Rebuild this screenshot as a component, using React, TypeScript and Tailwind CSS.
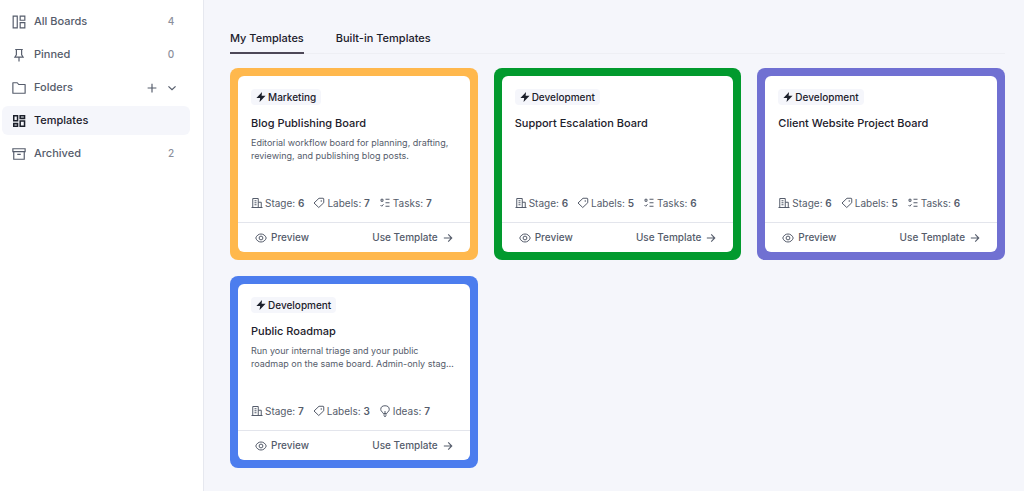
import { useState } from 'react';
import type { ReactNode } from 'react';

type Template = {
  id: string;
  name: string;
  category: string;
  description?: string;
  frame: string;
  stages: number;
  labels: number;
  items: number;
  itemKind: 'Tasks' | 'Ideas';
};

const TEMPLATES: Template[] = [
  {
    id: 'blog',
    name: 'Blog Publishing Board',
    category: 'Marketing',
    description:
      'Editorial workflow board for planning, drafting, reviewing, and publishing blog posts.',
    frame: 'bg-[#ffb84d]',
    stages: 6,
    labels: 7,
    items: 7,
    itemKind: 'Tasks',
  },
  {
    id: 'support',
    name: 'Support Escalation Board',
    category: 'Development',
    frame: 'bg-[#029a2e]',
    stages: 6,
    labels: 5,
    items: 6,
    itemKind: 'Tasks',
  },
  {
    id: 'website',
    name: 'Client Website Project Board',
    category: 'Development',
    frame: 'bg-[#7070d2]',
    stages: 6,
    labels: 5,
    items: 6,
    itemKind: 'Tasks',
  },
  {
    id: 'roadmap',
    name: 'Public Roadmap',
    category: 'Development',
    description:
      'Run your internal triage and your public roadmap on the same board. Admin-only stag…',
    frame: 'bg-[#4c7dee]',
    stages: 7,
    labels: 3,
    items: 7,
    itemKind: 'Ideas',
  },
];

function Icon({ className, children }: { className: string; children: ReactNode }) {
  return (
    <svg
      viewBox="0 0 24 24"
      fill="none"
      stroke="currentColor"
      strokeWidth={2}
      aria-hidden="true"
      className={`shrink-0 ${className}`}
    >
      {children}
    </svg>
  );
}

const BoardsIcon = () => (
  <Icon className="size-[14px]">
    <path d="M2 2h7v20H2zM14 2h8v7h-8zM14 13h8v9h-8z" />
  </Icon>
);

const PinIcon = () => (
  <Icon className="size-[14px]">
    <path d="M5.500 2.500h13M7.500 2.500v9l-2.500 4h14l-2.500-4v-9M12 15.500V23" />
  </Icon>
);

const FolderIcon = () => (
  <Icon className="size-[14px]">
    <path d="M1.500 3h7.500l2.500 3H22.500v15h-21z" strokeLinejoin="round" />
  </Icon>
);

const TemplatesIcon = () => (
  <Icon className="size-[14px]">
    <path d="M3 3h6.500v8.500H3zM14 3h7.500v4.500H14zM3 16.500h6.500V21H3zM14 12h7.500v9H14z" strokeWidth={2.600} />
  </Icon>
);

const ArchiveIcon = () => (
  <Icon className="size-[14px]">
    <path d="M1.500 3h21v5h-21zM3 8v13h18V8M9 12.500h6" />
  </Icon>
);

const BoltIcon = () => (
  <Icon className="size-[10px]">
    <path d="M14.500 0 1 14.500h9L8.500 24 23 9h-9.500z" fill="currentColor" stroke="none" />
  </Icon>
);

const StageIcon = () => (
  <Icon className="size-3">
    <path d="M1 21h22M3.500 21V3h11v18M14.500 10.500h6V21M7 7.500h4M7 11.500h4M7 15.500h4" />
  </Icon>
);

const LabelIcon = () => (
  <Icon className="size-3">
    <path d="M12 2.500h8q1.500 0 1.500 1.500v7.500L11.500 21 2 12z" strokeLinejoin="round" />
    <circle cx="16.500" cy="8" r="1.500" fill="currentColor" stroke="none" />
  </Icon>
);

const TasksIcon = () => (
  <Icon className="size-3">
    <path d="M4 4.500h4v4H4zM13 4.500h8M13 11.500h8M13 18.500h8M3 16l2.500 2.500L9 14.500" />
  </Icon>
);

const IdeasIcon = () => (
  <Icon className="size-3">
    <path d="M8.500 17c0-2.500-5-3.500-5-8a8.500 7.500 0 0 1 17 0c0 4.500-5 5.500-5 8zM8.500 20h7M10.500 23h3M12 17v-5" />
  </Icon>
);

const EyeIcon = () => (
  <Icon className="size-3">
    <path d="M1.500 12C3.500 6.500 7.500 4 12 4s8.500 2.500 10.500 8c-2 5.500-6 8-10.500 8S3.500 17.500 1.500 12z" />
    <circle cx="12" cy="12" r="3.800" />
  </Icon>
);

const ArrowIcon = () => (
  <Icon className="size-[10px]">
    <path d="M2 12h19M12.500 3.500 21 12l-8.500 8.500" strokeWidth={2.600} />
  </Icon>
);

const PlusIcon = () => (
  <Icon className="size-[10px]">
    <path d="M12 1.500v21M1.500 12h21" strokeWidth={2.800} />
  </Icon>
);

const ChevronIcon = () => (
  <Icon className="size-[10px]">
    <path d="m3.500 8 8.500 8 8.500-8" strokeWidth={3} />
  </Icon>
);

function NavItem({
  icon,
  label,
  count,
  active,
  children,
}: {
  icon: ReactNode;
  label: string;
  count?: number;
  active?: boolean;
  children?: ReactNode;
}) {
  return (
    <li
      className={`flex h-[29px] items-center rounded-md pr-[13px] ${
        active ? 'bg-[#f5f6fb] text-[#1c202b]' : 'text-[#555c6b]'
      }`}
    >
      <a
        href="#"
        aria-current={active ? 'page' : undefined}
        className="flex flex-1 items-center gap-2 pl-[10px]"
      >
        {icon}
        <span className="flex-1">{label}</span>
        {count !== undefined && (
          <span className="w-3 text-center text-[10px] text-[#8b8f9b]">{count}</span>
        )}
      </a>
      {children}
    </li>
  );
}

function Stat({ icon, label, value }: { icon: ReactNode; label: string; value: number }) {
  return (
    <span className="flex items-center gap-0.5">
      {icon}
      <span>
        {label}: <b className="font-semibold">{value}</b>
      </span>
    </span>
  );
}

function TemplateCard({ template }: { template: Template }) {
  return (
    <article className={`rounded-lg p-2 ${template.frame}`}>
      <div className="flex h-full flex-col rounded-md bg-white">
        <div className="flex min-h-[146px] flex-1 flex-col px-[13px] pt-[13px] pb-3">
          <span className="flex h-4 items-center gap-0.5 self-start rounded bg-[#f5f6fb] px-[5px] text-[10px] font-medium text-[#1c202b]">
            <BoltIcon />
            {template.category}
          </span>
          <h2 className="mt-[10px] text-[11px] leading-4 font-medium text-[#1c202b]">
            {template.name}
          </h2>
          {template.description && (
            <p className="mt-[5px] text-[9px] leading-[13px] text-[#555c6b]">
              {template.description}
            </p>
          )}
          <div className="mt-auto flex gap-[9px] text-[10px] leading-[14px] whitespace-nowrap text-[#555c6b]">
            <Stat icon={<StageIcon />} label="Stage" value={template.stages} />
            <Stat icon={<LabelIcon />} label="Labels" value={template.labels} />
            <Stat
              icon={template.itemKind === 'Tasks' ? <TasksIcon /> : <IdeasIcon />}
              label={template.itemKind}
              value={template.items}
            />
          </div>
        </div>
        <div className="flex h-[30px] items-center justify-between border-t border-[#e3e5ec] px-[17px] text-[10px] font-medium text-[#555c6b]">
          <button type="button" className="flex items-center gap-1">
            <EyeIcon />
            Preview
          </button>
          <button type="button" className="flex items-center gap-[5px]">
            Use Template
            <ArrowIcon />
          </button>
        </div>
      </div>
    </article>
  );
}

export default function App() {
  const [tab, setTab] = useState('My Templates');

  return (
    <div className="flex min-h-screen bg-[#f5f6fb] font-['Inter',sans-serif]">
      {/* Sidebar */}
      <aside className="w-[204px] shrink-0 border-r border-[#e6e8ef] bg-white pt-[7px] pr-[13px] pl-0.5">
        <nav>
          <ul className="flex flex-col gap-1 text-[11px] font-medium">
            <NavItem icon={<BoardsIcon />} label="All Boards" count={4} />
            <NavItem icon={<PinIcon />} label="Pinned" count={0} />
            <NavItem icon={<FolderIcon />} label="Folders">
              <div className="flex gap-[10px]">
                <button type="button" aria-label="Add folder">
                  <PlusIcon />
                </button>
                <button type="button" aria-label="Toggle folders">
                  <ChevronIcon />
                </button>
              </div>
            </NavItem>
            <NavItem icon={<TemplatesIcon />} label="Templates" active />
            <NavItem icon={<ArchiveIcon />} label="Archived" count={2} />
          </ul>
        </nav>
      </aside>

      {/* Templates */}
      <main className="min-w-0 flex-1 pt-6 pr-[19px] pb-6 pl-[26px]">
        <div role="tablist" className="flex gap-8 border-b border-[#eeeff4] text-[11px] font-medium">
          {['My Templates', 'Built-in Templates'].map(name => (
            <button
              key={name}
              type="button"
              role="tab"
              aria-selected={tab === name}
              onClick={() => setTab(name)}
              className={`-mb-px h-[30px] border-b-2 text-[#1c202b] ${
                tab === name ? 'border-[#4d4857]' : 'border-transparent'
              }`}
            >
              {name}
            </button>
          ))}
        </div>

        <div className="mt-[14px] grid grid-cols-3 gap-4">
          {TEMPLATES.map(template => (
            <TemplateCard key={template.id} template={template} />
          ))}
        </div>
      </main>
    </div>
  );
}
